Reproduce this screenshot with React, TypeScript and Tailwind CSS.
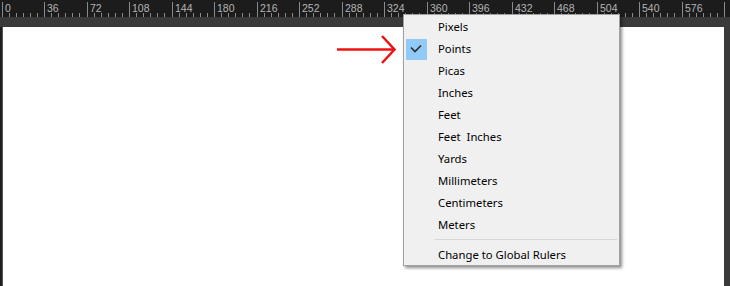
const UNITS = [
  'Pixels',
  'Points',
  'Picas',
  'Inches',
  'Feet',
  'Feet  Inches',
  'Yards',
  'Millimeters',
  'Centimeters',
  'Meters',
];

const MAJOR = 42.5;

function Ruler() {
  const majors = Array.from({ length: 18 }, (_, i) => i);
  return (
    <svg width={730} height={17} className="block">
      <rect width={730} height={17} fill="#1c1c1c" />
      {majors.map((i) => {
        const x = Math.round(1.5 + i * MAJOR) + 0.5;
        return (
          <g key={i}>
            <line x1={x} y1={2} x2={x} y2={17} stroke="#8a8a8a" strokeWidth={1} />
            {[1, 2, 3, 4, 5].map((j) => {
              const mx = Math.round(1.5 + i * MAJOR + (j * MAJOR) / 6) + 0.5;
              return (
                <line key={j} x1={mx} y1={13} x2={mx} y2={17} stroke="#8a8a8a" strokeWidth={1} />
              );
            })}
            {/* last label falls off the edge */}
            {i < 17 && (
              <text
                x={x + 2.5}
                y={12}
                fill="#b4b4b4"
                fontSize={10.5}
                fontFamily="'Liberation Sans', Arial, sans-serif"
              >
                {i * 36}
              </text>
            )}
          </g>
        );
      })}
    </svg>
  );
}

function Arrow() {
  return (
    <svg width={62} height={30} className="absolute left-[335px] top-[34px]">
      <line x1={2} y1={15.5} x2={59} y2={15.5} stroke="#ee1111" strokeWidth={2.5} />
      <polyline
        points="47,2 59.5,15.5 47,29"
        fill="none"
        stroke="#ee1111"
        strokeWidth={2.5}
      />
    </svg>
  );
}

function CheckMark() {
  return (
    <svg width={21} height={21}>
      <polyline
        points="5,8.5 9,12.5 15,6.5"
        fill="none"
        stroke="#2b2b2b"
        strokeWidth={1.6}
      />
    </svg>
  );
}

function UnitsMenu() {
  return (
    <div className="absolute left-[403px] top-[14px] w-[217px] bg-[#f0f0f0] border border-[#a0a0a0] shadow-[2px_2px_3px_rgba(0,0,0,0.45)] font-['Noto_Sans','Open_Sans',sans-serif] text-[11.3px] text-black">
      {UNITS.map((u) => (
        <div key={u} className="flex items-center h-[22px] pt-[2px]">
          <div className="w-[34px] h-full flex items-center pl-[2px]">
            {u === 'Points' && (
              <div className="w-[21px] h-[21px] bg-[#91c9f7]">
                <CheckMark />
              </div>
            )}
          </div>
          <span className="whitespace-pre">{u}</span>
        </div>
      ))}
      <div className="h-[8px] flex items-center pl-[31px] pr-[2px]">
        <div className="h-px w-full bg-[#d7d7d7]" />
      </div>
      <div className="flex items-center h-[22px] pt-[2px]">
        <div className="w-[34px]" />
        <span>Change to Global Rulers</span>
      </div>
    </div>
  );
}

export default function App() {
  return (
    <div className="relative w-[730px] h-[286px] overflow-hidden bg-[#3a3a3a]">
      <Ruler />
      <div className="flex h-[269px] pt-[10px]">
        <div className="w-[2px] bg-[#1f1f1f]" />
        <div className="w-px bg-[#555]" />
        <div className="flex-1 bg-white" />
        <div className="w-[6px]" />
      </div>
      <Arrow />
      <UnitsMenu />
    </div>
  );
}
